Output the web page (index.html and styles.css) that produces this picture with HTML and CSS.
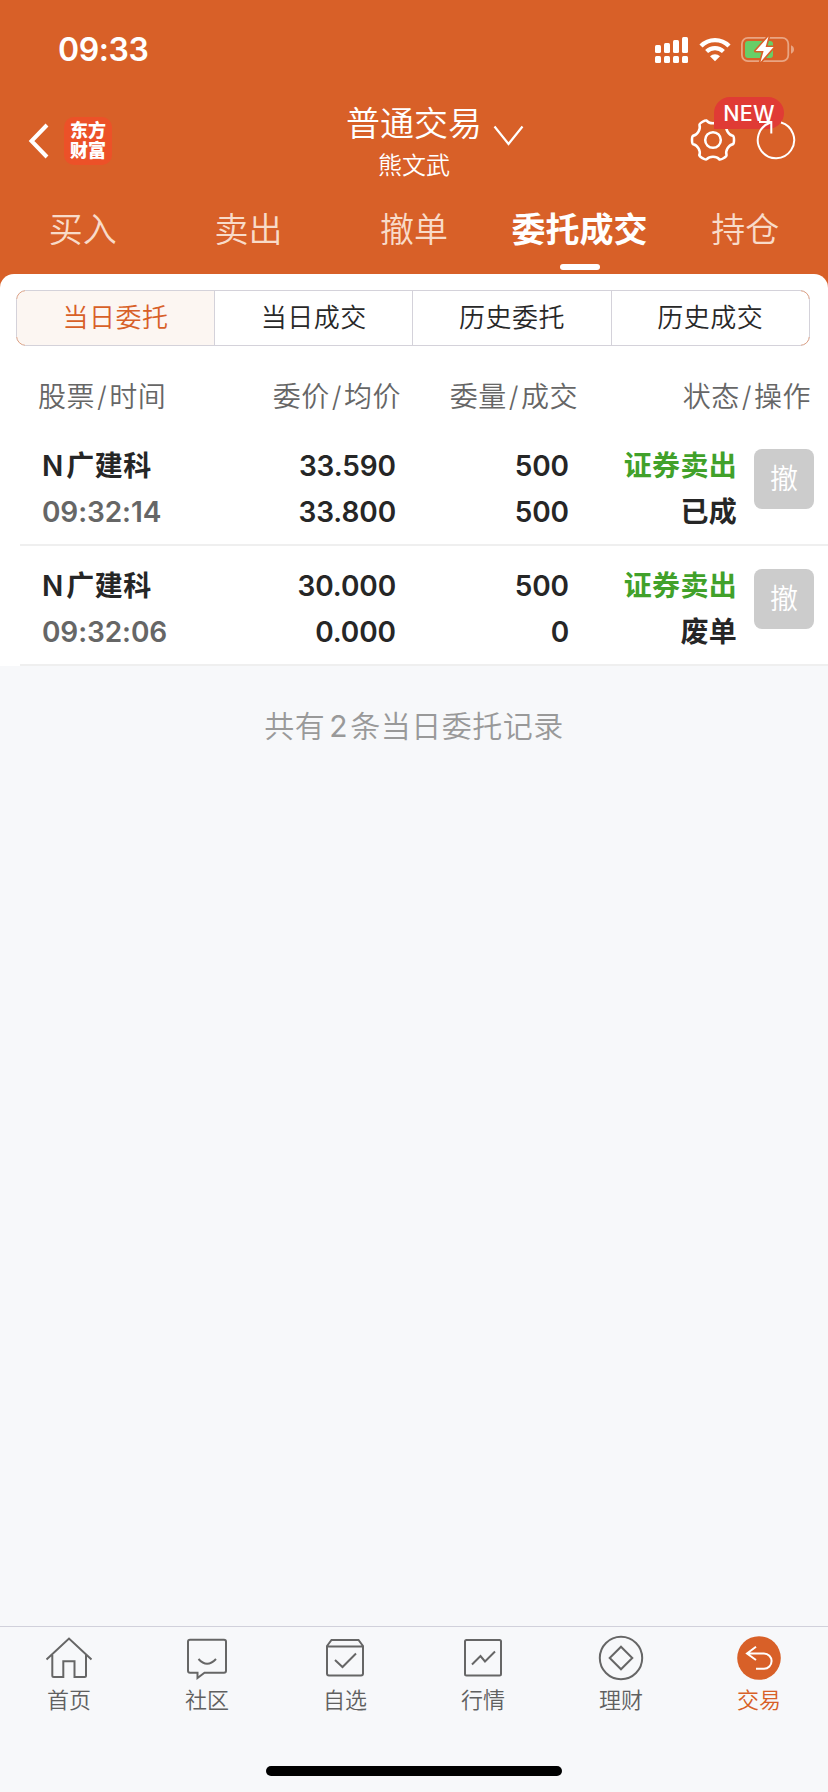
FILE: index.html
```html
<!DOCTYPE html>
<html lang="zh-CN">
<head>
<meta charset="utf-8">
<title>普通交易</title>
<link rel="stylesheet" href="styles.css">
</head>
<body>
<div class="screen">
  <header class="header">
    <div class="status-bar">
      <span class="clock">09:33</span>
      <div class="status-icons">
        <svg class="signal" width="34" height="27" viewBox="0 0 34 27" fill="#fff">
          <rect x="0" y="8" width="6" height="8" rx="1.5"/><rect x="9" y="6" width="6" height="10" rx="1.5"/><rect x="18" y="3" width="6" height="13" rx="1.5"/><rect x="27" y="0" width="6" height="16" rx="1.5"/>
          <rect x="0" y="19" width="6" height="7" rx="1.5"/><rect x="9" y="19" width="6" height="7" rx="1.5"/><rect x="18" y="19" width="6" height="7" rx="1.5"/><rect x="27" y="19" width="6" height="7" rx="1.5"/>
        </svg>
        <svg class="wifi" width="32" height="25" viewBox="0 0 32 25">
          <path d="M2 9A19.6 19.6 0 0 1 30 9" fill="none" stroke="#fff" stroke-width="4.4"/>
          <path d="M7.6 14.6A12 12 0 0 1 24.4 14.6" fill="none" stroke="#fff" stroke-width="4.2"/>
          <path d="M11 19.2A7.3 7.3 0 0 1 21 19.2L16 24.2Z" fill="#fff"/>
        </svg>
        <svg class="battery" width="54" height="28" viewBox="0 0 54 28">
          <rect x="0.9" y="2.9" width="46.4" height="23.2" rx="6" fill="none" stroke="#e9a583" stroke-width="1.8"/>
          <path d="M50 10.300v8.400c1.800-.6 3-2.200 3-4.200s-1.200-3.600-3-4.200z" fill="#e9a583"/>
          <rect x="4" y="6" width="28" height="17" rx="3" fill="#68ce67"/>
          <path d="M27.500 1.500L14.600 16h8L19.500 27 32.600 12h-8z" fill="#fff" stroke="#d86028" stroke-width="3.200" paint-order="stroke" stroke-linejoin="round"/>
        </svg>
      </div>
    </div>
    <div class="nav">
      <div class="nav-left">
        <svg class="back" width="22" height="36" viewBox="0 0 22 36"><path d="M19 2L3.500 18l15.500 16" fill="none" stroke="#fff" stroke-width="4"/></svg>
        <div class="logo"><span>东方</span><span>财富</span></div>
      </div>
      <div class="nav-title">
        <div class="account-type">普通交易<svg class="chevron" width="32" height="22" viewBox="0 0 32 22"><path d="M1.500 1.500L15.500 19 29.500 1.500" fill="none" stroke="#fff" stroke-width="2.200"/></svg></div>
        <div class="user-name">熊文武</div>
      </div>
      <div class="nav-right">
        <svg class="gear" width="48" height="48" viewBox="-25.500 -25.500 51 51" fill="none" stroke="#fff" stroke-width="2.700" stroke-linecap="round">
          <defs><path id="tooth" d="M6.600 20.400C4.500 18 2 17.800 0 17.800S-4.500 18-6.600 20.400C-7.900 21.700-15.100 17.600-14.400 16"/></defs>
          <circle r="8.300"/>
          <use href="#tooth"/><use href="#tooth" transform="rotate(60)"/><use href="#tooth" transform="rotate(120)"/><use href="#tooth" transform="rotate(180)"/><use href="#tooth" transform="rotate(240)"/><use href="#tooth" transform="rotate(300)"/>
        </svg>
        <span class="new-badge">NEW</span>
        <svg class="refresh" width="42" height="42" viewBox="0 0 42 42" fill="none" stroke="#fff" stroke-width="2">
          <path d="M26 4.500A18.200 18.200 0 1 1 15 4.800M4 4H16.300V15.500"/>
        </svg>
      </div>
    </div>
    <nav class="tabs">
      <span class="tab">买入</span><span class="tab">卖出</span><span class="tab">撤单</span><span class="tab active">委托成交</span><span class="tab">持仓</span>
    </nav>
  </header>
  <main class="sheet">
    <div class="segments">
      <span class="segment selected">当日委托</span><span class="segment">当日成交</span><span class="segment">历史委托</span><span class="segment">历史成交</span>
    </div>
    <div class="columns"><span>股票<i>/</i>时间</span><span>委价<i>/</i>均价</span><span>委量<i>/</i>成交</span><span>状态<i>/</i>操作</span></div>
    <div class="order">
      <div class="cell name"><span>N<b>广建科</b></span><span class="time">09:32:14</span></div>
      <div class="cell"><span>33.590</span><span>33.800</span></div>
      <div class="cell"><span>500</span><span>500</span></div>
      <div class="cell status"><span class="sell">证券卖出</span><span>已成</span></div>
      <button class="cancel">撤</button>
    </div>
    <div class="order">
      <div class="cell name"><span>N<b>广建科</b></span><span class="time">09:32:06</span></div>
      <div class="cell"><span>30.000</span><span>0.000</span></div>
      <div class="cell"><span>500</span><span>0</span></div>
      <div class="cell status"><span class="sell">证券卖出</span><span>废单</span></div>
      <button class="cancel">撤</button>
    </div>
  </main>
  <p class="summary">共有<span class="count">2</span>条当日委托记录</p>
  <footer class="bottom">
    <div class="bottom-tabs">
      <div class="item"><svg width="48" height="48" viewBox="0 0 48 48"><path d="M1.500 25.500L24 4.500l22.500 21M7.300 21v20.500q0 1.500 1.500 1.500h9.500V27.200h11.200V43H39.500q1.500 0 1.500-1.500V21"/></svg>首页</div>
      <div class="item"><svg width="48" height="48" viewBox="0 0 48 48"><path d="M7 5.800H41q2 0 2 2V36.800q0 2-2 2H21.500L14.500 44V38.800H7q-2 0-2-2V7.800q0-2 2-2zM15.500 25q8.500 9.500 17.500 0"/></svg>社区</div>
      <div class="item"><svg width="48" height="48" viewBox="0 0 48 48"><path d="M6 12L10.500 6H37.500L42 12V39.500q0 2-2 2H8q-2 0-2-2zM6 12.500H42M14 26l7.500 7L35 19.500"/></svg>自选</div>
      <div class="item"><svg width="48" height="48" viewBox="0 0 48 48"><rect x="6" y="6" width="36" height="35.500" rx="1.500"/><path d="M13 30.500L21.500 22l4.500 5.500L36 17.500"/></svg>行情</div>
      <div class="item"><svg width="48" height="48" viewBox="0 0 48 48"><circle cx="24" cy="24" r="21.200"/><path d="M24 12.700L35.300 24 24 35.300 12.700 24z"/></svg>理财</div>
      <div class="item current"><svg width="48" height="48" viewBox="0 0 48 48"><circle cx="24" cy="24" r="21.800" fill="#d86028" stroke="none"/><path d="M21 12.800L12 19.500l9 6.500M12 19.500H29a7.600 7.600 0 0 1 0 15.200H21" stroke="#fff"/></svg>交易</div>
    </div>
    <div class="home-indicator"></div>
  </footer>
</div>
</body>
</html>
```
FILE: styles.css
```css
* { box-sizing: border-box; }
body { margin: 0; font-family: Inter, "Noto Sans CJK SC", sans-serif; font-weight: 350; }
.screen { width: 828px; height: 1792px; background: #f7f8fa; display: flex; flex-direction: column; }
.header { height: 288px; background: #d86028; color: #fff; display: flex; flex-direction: column; flex: none; }
.status-bar { height: 100px; display: flex; justify-content: space-between; padding: 30px 33px 0 58px; }
.clock { font-size: 32px; font-weight: 600; line-height: 40px; letter-spacing: -.4px; }
.status-icons { display: flex; align-items: flex-start; gap: 10px; padding-top: 7px; }
.battery { margin-top: -2px; }
.nav { height: 97px; padding-top: 1px; display: grid; grid-template-columns: 1fr 300px 1fr; }
.nav-left { display: flex; align-items: center; padding: 0 0 17px 28px; gap: 14px; }
.logo { width: 48px; height: 48px; border-radius: 10px; background: #ec5128; display: flex; flex-direction: column; align-items: center; justify-content: center; font-size: 18px; line-height: 19.500px; font-weight: 900; }
.nav-title { text-align: center; }
.account-type { font-size: 34px; line-height: 46px; position: relative; }
.chevron { position: absolute; left: 229px; top: 24px; }
.user-name { font-size: 24px; line-height: 38px; }
.nav-right { display: flex; position: relative; justify-content: flex-end; padding: 15px 31px 0 0; gap: 18px; }
.refresh { position: relative; margin-top: 2px; }
.new-badge { position: absolute; left: 150px; top: -4px; width: 70px; height: 32px; border-radius: 16px 16px 16px 0; background: #e03b35; font-size: 21.500px; font-weight: 500; line-height: 33px; text-align: center; letter-spacing: .2px; }
.tabs { height: 77px; display: grid; grid-template-columns: repeat(5, 1fr); font-size: 34px; line-height: 65px; text-align: center; color: #f8dbc9; }
.active { color: #fff; font-weight: 700; display: flex; flex-direction: column; align-items: center; }
.active::after { content: ""; width: 40px; height: 6px; border-radius: 3px; background: #fff; margin-top: 2px; }
.sheet { background: #fff; border-radius: 14px 14px 0 0; height: 392px; margin-top: -14px; padding-top: 16px; flex: none; }
.segments { position: relative; margin: 0 18px 0 16px; height: 56px; border-radius: 10px; border: 1px solid #d4d2da; display: grid; grid-template-columns: 197px repeat(3, 1fr); font-size: 26px; line-height: 54px; letter-spacing: .5px; text-align: center; color: #282828; }
.segments::after { content: ""; position: absolute; inset: -1px; border: 1px solid #e39f7c; border-radius: 10px; pointer-events: none; mask: linear-gradient(#000 0 0) 0 0 / 9px 9px no-repeat, linear-gradient(#000 0 0) 100% 0 / 9px 9px no-repeat, linear-gradient(#000 0 0) 0 100% / 9px 9px no-repeat, linear-gradient(#000 0 0) 100% 100% / 9px 9px no-repeat; }
.segment { height: 54px; }
.segment + .segment { border-left: 1px solid #d4d2da; }
.selected { background: #fcf6f2; color: #d86028; border-radius: 9px 0 0 9px; }
.columns { height: 80px; padding: 0 17px 0 38px; display: grid; grid-template-columns: 163px 200px 177px 1fr; font-size: 28px; line-height: 103px; letter-spacing: .5px; color: #666; text-align: right; }
.columns i { font-style: normal; padding: 0 2px; }
.columns span:first-child { text-align: left; }
.order { height: 120px; margin-left: 20px; padding: 17px 14px 0 22px; border-bottom: 2px solid #efefef; display: grid; grid-template-columns: 154px 200px 173px 168px 60px; font-size: 28px; font-weight: 600; color: #262626; letter-spacing: -.1px; }
.cell { display: flex; flex-direction: column; line-height: 46px; text-align: right; white-space: nowrap; }
.name { text-align: left; }
.name b { font-weight: 700; padding-left: 3px; letter-spacing: .5px; }
.status { font-weight: 700; letter-spacing: .3px; }
.time { color: #666; }
.sell { color: #41a12a; }
.cancel { margin: 6px 0 0 17px; padding: 0; width: 60px; height: 60px; border: 0; border-radius: 8px; background: #ccc; color: #fff; font: inherit; font-size: 28px; font-weight: 350; line-height: 60px; }
.summary { margin: 0; text-align: center; font-size: 30px; line-height: 121px; letter-spacing: .5px; color: #999; flex: 1; }
.count { padding: 0 2px 0 4px; font-weight: 400; }
.bottom { height: 166px; border-top: 1px solid #d1d1db; display: flex; flex-direction: column; align-items: center; }
.bottom-tabs { width: 100%; height: 139px; padding-top: 7px; display: grid; grid-template-columns: repeat(6, 1fr); font-size: 22px; line-height: 36px; color: #606060; }
.item { display: flex; flex-direction: column; align-items: center; }
.item svg { fill: none; stroke: #666; stroke-width: 2; flex: none; }
.current { color: #d86028; }
.home-indicator { width: 296px; height: 10px; border-radius: 5px; background: #000; flex: none; }
```
